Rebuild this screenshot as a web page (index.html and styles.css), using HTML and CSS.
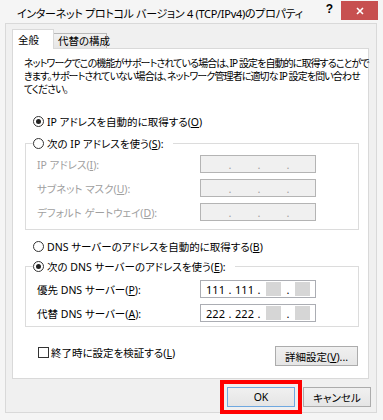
FILE: index.html
```html
<!DOCTYPE html>
<html>
<head>
	<title>
		インターネット プロトコル バージョン 4 (TCP/IPv4)のプロパティ
	</title>

	<link rel="stylesheet" href="styles.css">
</head>
<body>
	<div class="window">
		<div class="titlebar">
			<span class="title">インターネット プロトコル バージョン 4 (TCP/IPv4)のプロパティ</span>
			<span class="help">?</span>
			<span class="close">
				<svg width="8" height="8" viewBox="0 0 8 8"><path d="M1 1 L7 7 M7 1 L1 7" stroke="#fff" stroke-width="1.6"/></svg>
			</span>
		</div>
		<div class="client">
			<div class="tabs">
				<div class="tab active">全般</div>
				<div class="tab">代替の構成</div>
			</div>
			<div class="panel">
				<p class="intro">ネットワークでこの機能がサポートされている場合は、IP 設定を自動的に取得することがで<br>きます。サポートされていない場合は、ネットワーク管理者に適切な IP 設定を問い合わせ<br>てください。</p>

				<div class="radio-row"><span class="radio checked"></span><span>IP アドレスを自動的に取得する(<u>O</u>)</span></div>

				<fieldset class="group disabled">
					<legend><span class="radio"></span><span>次の IP アドレスを使う(<u>S</u>):</span></legend>
					<div class="field-row">
						<span class="label">IP アドレス(<u>I</u>):</span>
						<span class="ip"><span class="seg"></span><span class="dot">.</span><span class="seg"></span><span class="dot">.</span><span class="seg"></span><span class="dot">.</span><span class="seg"></span></span>
					</div>
					<div class="field-row">
						<span class="label">サブネット マスク(<u>U</u>):</span>
						<span class="ip"><span class="seg"></span><span class="dot">.</span><span class="seg"></span><span class="dot">.</span><span class="seg"></span><span class="dot">.</span><span class="seg"></span></span>
					</div>
					<div class="field-row">
						<span class="label">デフォルト ゲートウェイ(<u>D</u>):</span>
						<span class="ip"><span class="seg"></span><span class="dot">.</span><span class="seg"></span><span class="dot">.</span><span class="seg"></span><span class="dot">.</span><span class="seg"></span></span>
					</div>
				</fieldset>

				<div class="radio-row dns-auto"><span class="radio"></span><span>DNS サーバーのアドレスを自動的に取得する(<u>B</u>)</span></div>

				<fieldset class="group dns">
					<legend><span class="radio checked"></span><span>次の DNS サーバーのアドレスを使う(<u>E</u>):</span></legend>
					<div class="field-row">
						<span class="label">優先 DNS サーバー(<u>P</u>):</span>
						<span class="ip"><span class="seg">111</span><span class="dot">.</span><span class="seg">111</span><span class="dot">.</span><span class="seg"><span class="mask"></span></span><span class="dot">.</span><span class="seg"><span class="mask"></span></span></span>
					</div>
					<div class="field-row">
						<span class="label">代替 DNS サーバー(<u>A</u>):</span>
						<span class="ip"><span class="seg">222</span><span class="dot">.</span><span class="seg">222</span><span class="dot">.</span><span class="seg"><span class="mask"></span></span><span class="dot">.</span><span class="seg"><span class="mask"></span></span></span>
					</div>
				</fieldset>

				<div class="check-row">
					<span class="check-label"><span class="checkbox"></span><span>終了時に設定を検証する(<u>L</u>)</span></span>
					<button class="btn advanced">詳細設定(<u>V</u>)...</button>
				</div>
			</div>
			<div class="buttons">
				<button class="btn default marked">OK</button>
				<button class="btn">キャンセル</button>
			</div>
		</div>
	</div>
</body>
</html>
```

FILE: styles.css
```css
body {
	margin: 0;
	font-family: "Noto Sans", "Noto Sans CJK JP", sans-serif;
	font-size: 10.5px;
	font-feature-settings: "palt";
	color: #000;
}

u {
	text-decoration: underline;
	text-underline-offset: 1px;
}

.window {
	width: 383px;
	height: 420px;
	box-sizing: border-box;
	background: #f5f5f5;
	padding: 0 6px 7px 5px;
	display: flex;
	flex-direction: column;
}

.titlebar {
	height: 23px;
	display: flex;
	align-items: flex-start;
}

.title {
	font-size: 11px;
	line-height: 16px;
	letter-spacing: -0.3px;
	margin: 6px 0 0 12px;
	white-space: nowrap;
}

.help {
	margin: 1px 0 0 auto;
	font-family: "Liberation Sans", sans-serif;
	font-weight: bold;
	font-size: 12px;
	line-height: 16px;
}

.close {
	width: 37px;
	height: 19px;
	margin: 1px -1px 0 8px;
	background: #c75050;
	display: flex;
	align-items: center;
	justify-content: center;
}

.client {
	flex: 1;
	border: 1px solid #d9d9d9;
	background: #f0f0f0;
	padding: 5px 7px 0 6px;
	display: flex;
	flex-direction: column;
}

.tabs {
	height: 19px;
	display: flex;
	align-items: flex-end;
	position: relative;
	z-index: 1;
}

.tab {
	box-sizing: border-box;
	height: 15px;
	width: 54px;
	margin-left: -1px;
	padding-left: 4px;
	border: 1px solid #b9b9b9;
	border-bottom: none;
	background: linear-gradient(#f2f2f2, #e6e6e6);
	line-height: 14px;
	white-space: nowrap;
}

.tab.active {
	height: 20px;
	width: 42px;
	margin: 0 0 -1px 0;
	padding-left: 5px;
	border-color: #d9d9d9;
	background: #fff;
	line-height: 20px;
	position: relative;
	z-index: 2;
}

.panel {
	box-sizing: border-box;
	height: 331px;
	background: #fff;
	border: 1px solid #d9d9d9;
	padding: 8px 9px 0 11px;
}

.intro {
	margin: 0;
	font-size: 10px;
	letter-spacing: -0.9px;
	line-height: 13px;
	white-space: nowrap;
}

.radio-row {
	display: flex;
	align-items: center;
	height: 16px;
	margin: 17px 0 0 9px;
	gap: 3px;
	white-space: nowrap;
}

.radio-row.dns-auto {
	margin-top: 8px;
}

.radio {
	box-sizing: border-box;
	width: 11px;
	height: 11px;
	border: 1px solid #333;
	border-radius: 50%;
	background: #fff;
	display: flex;
	align-items: center;
	justify-content: center;
	flex: none;
}

.radio.checked::after {
	content: "";
	width: 5px;
	height: 5px;
	border-radius: 50%;
	background: #222;
}

.group {
	margin: 6px 0 0 1px;
	border: 1px solid #dcdcdc;
	padding: 4px 0 8px 7px;
	min-inline-size: 0;
}

.group.dns {
	margin-top: 4px;
	padding: 6px 0 4px 7px;
}

.group legend {
	height: 16px;
	padding: 0 9px 0 0;
	display: flex;
	align-items: center;
	gap: 3px;
	white-space: nowrap;
}

.field-row {
	height: 18px;
	padding-left: 4px;
	display: flex;
	align-items: center;
}

.field-row + .field-row {
	margin-top: 6px;
}

.label {
	width: 163px;
	white-space: nowrap;
}

.ip {
	box-sizing: border-box;
	width: 116px;
	height: 18px;
	border: 1px solid #abadb3;
	background: #fff;
	padding-left: 3px;
	display: flex;
	align-items: center;
	font-size: 11px;
}

.seg {
	width: 23px;
	display: flex;
	justify-content: center;
	align-items: center;
}

.dot {
	width: 6px;
	text-align: center;
}

.mask {
	width: 15px;
	height: 14px;
	background: #d6d6d6;
}

.disabled .label,
.disabled .dot {
	color: #a0a0a0;
}

.disabled .ip {
	background: #f0f0f0;
	border-color: #b4b4b4;
}

.check-row {
	display: flex;
	align-items: flex-start;
	margin-top: 17px;
}

.check-label {
	height: 16px;
	display: flex;
	align-items: center;
	gap: 2px;
	margin-left: 14px;
	white-space: nowrap;
}

.checkbox {
	box-sizing: border-box;
	width: 11px;
	height: 11px;
	border: 1px solid #333;
	background: #fff;
}

.btn {
	box-sizing: border-box;
	height: 20px;
	width: 68px;
	padding: 0;
	border: 1px solid #acacac;
	background: linear-gradient(#f0f0f0, #e5e5e5);
	font-family: inherit;
	font-size: 10.5px;
	font-feature-settings: "palt";
	color: #000;
}

.btn.advanced {
	width: 83px;
	margin: 2px 1px 0 auto;
}

.btn.default {
	border-color: #6fa8e0;
}

.marked {
	outline: 4px solid #ff0000;
	outline-offset: 3px;
}

.buttons {
	display: flex;
	justify-content: flex-end;
	gap: 8px;
	margin: 8px -2px 0 0;
}
```
